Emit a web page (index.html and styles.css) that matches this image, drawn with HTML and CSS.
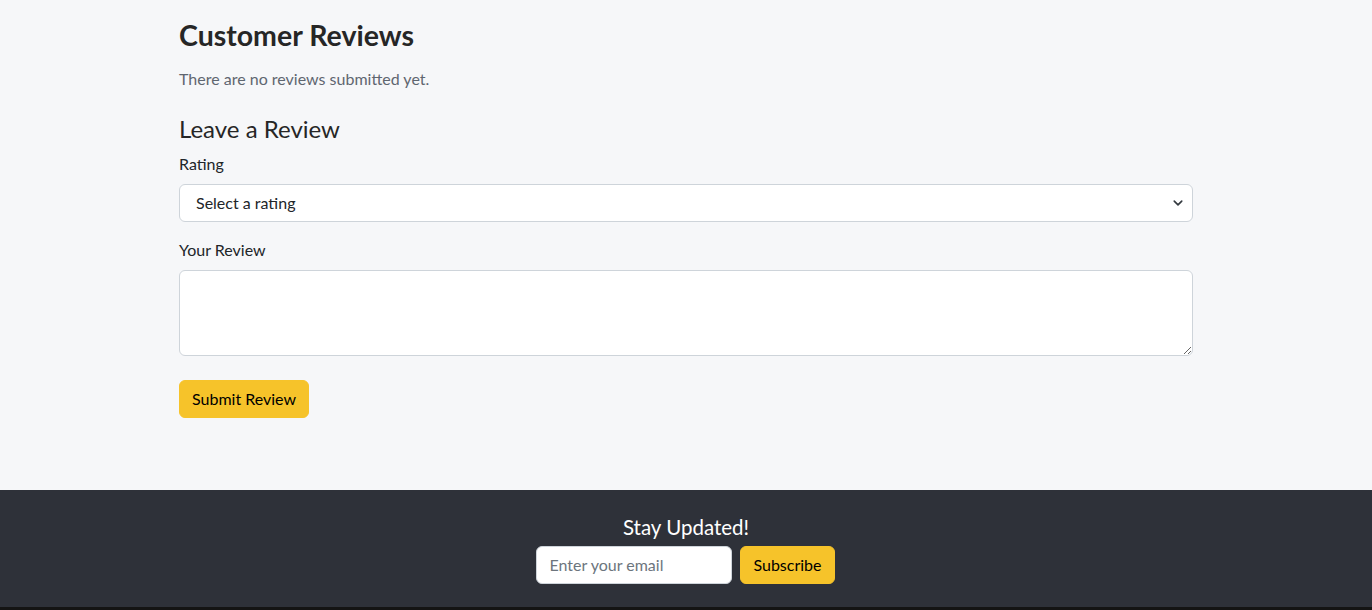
FILE: index.html
```html
<!DOCTYPE html>
<html lang="en">
<head>
<meta charset="utf-8">
<title>Customer Reviews</title>
<link rel="stylesheet" href="styles.css">
</head>
<body>
<main class="page">
  <section class="reviews">
    <h2 class="title">Customer Reviews</h2>
    <p class="muted">There are no reviews submitted yet.</p>
    <h4 class="subtitle">Leave a Review</h4>
    <form class="review-form">
      <div class="field">
        <label class="label" for="rating">Rating</label>
        <div class="select-wrap">
          <select id="rating" class="control select">
            <option>Select a rating</option>
            <option>5</option>
            <option>4</option>
            <option>3</option>
            <option>2</option>
            <option>1</option>
          </select>
          <svg class="chevron" width="12" height="10" viewBox="0 0 16 16"><path d="M2 5l6 6 6-6" fill="none" stroke="#343a40" stroke-width="2.6" stroke-linecap="round" stroke-linejoin="round"/></svg>
        </div>
      </div>
      <div class="field">
        <label class="label" for="review">Your Review</label>
        <textarea id="review" class="control textarea" rows="3"></textarea>
      </div>
      <button type="button" class="btn">Submit Review</button>
    </form>
  </section>
</main>
<footer class="footer">
  <h5 class="footer-title">Stay Updated!</h5>
  <form class="subscribe">
    <input class="control email" type="email" placeholder="Enter your email">
    <button type="button" class="btn">Subscribe</button>
  </form>
</footer>
</body>
</html>
```
FILE: styles.css
```css
* { box-sizing: border-box; }
html, body { margin: 0; padding: 0; }
body {
  font-family: Lato, "Open Sans", "Liberation Sans", sans-serif;
  font-size: 16px;
  line-height: 1.5;
  color: #212529;
  background: #f6f7f9;
  height: 610px;
  overflow: hidden;
}
.page {
  height: 490px;
  padding-top: 18px;
}
.reviews {
  width: 1014px;
  margin: 0 auto;
}
.title {
  margin: 0 0 15px;
  font-size: 28.5px;
  font-weight: 700;
  line-height: 1.2;
  color: #262626;
}
.muted {
  margin: 0 0 24px;
  color: #5f6670;
}
.subtitle {
  margin: 0 0 8px;
  font-size: 24px;
  font-weight: 400;
  line-height: 1.2;
  color: #262626;
}
.field { margin-bottom: 16px; }
.label {
  display: block;
  margin-bottom: 8px;
}
.control {
  display: block;
  width: 100%;
  font-family: inherit;
  font-size: 16px;
  line-height: 1.5;
  color: #212529;
  background: #fff;
  border: 1px solid #ced4da;
  border-radius: 6px;
  padding: 6px 12px;
}
.select-wrap { position: relative; }
.select {
  appearance: none;
  -webkit-appearance: none;
  height: 38px;
  padding-left: 16px;
}
.chevron {
  position: absolute;
  right: 9px;
  top: 14px;
  pointer-events: none;
}
.textarea {
  height: 86px;
  resize: vertical;
}
.btn {
  font-family: inherit;
  font-size: 16px;
  line-height: 1.5;
  color: #000;
  background: #f6c32a;
  border: 1px solid #f6c32a;
  border-radius: 6px;
  padding: 6px 12px;
  margin-top: 8px;
}
.footer {
  height: 120px;
  background: #2e3139;
  color: #fff;
  text-align: center;
  padding-top: 25px;
  border-bottom: 3px solid #141414;
}
.footer-title {
  margin: 0 0 6px;
  font-size: 20.5px;
  font-weight: 400;
  line-height: 1.2;
}
.subscribe {
  display: flex;
  justify-content: center;
  gap: 8px;
  padding-right: 1px;
}
.email {
  width: 196px;
  height: 38px;
}
.email::placeholder { color: #6c757d; }
.subscribe .btn { margin-top: 0; padding: 6px 12px; }
```
